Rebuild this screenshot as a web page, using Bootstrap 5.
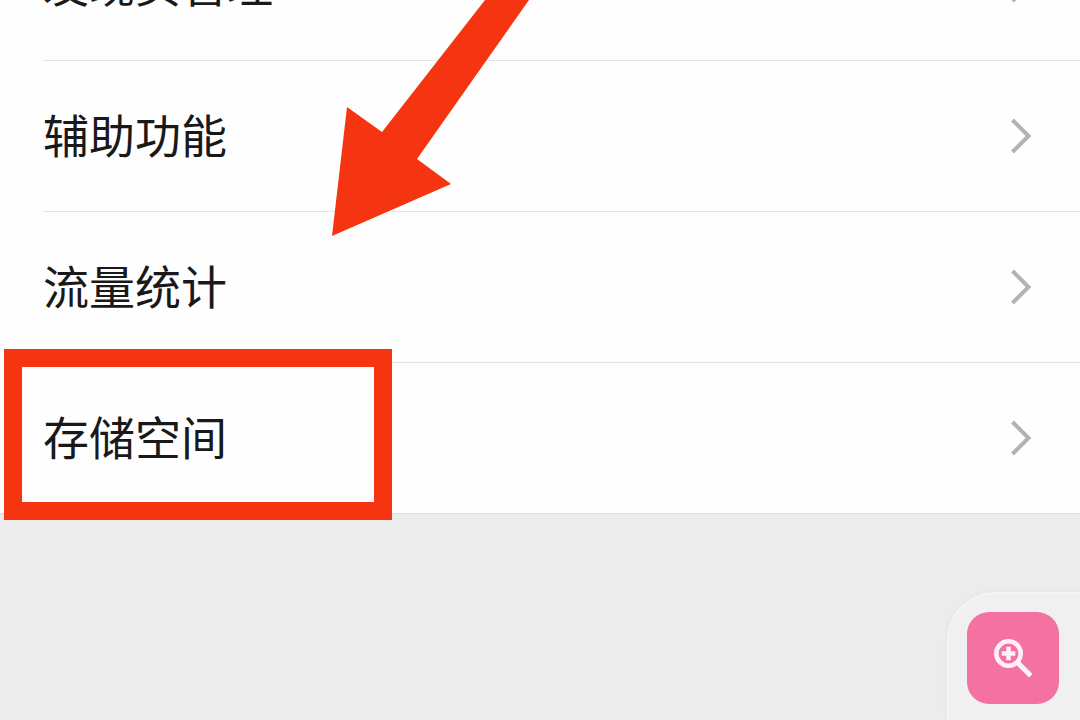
<!DOCTYPE html>
<html lang="zh-CN">
<head>
<meta charset="utf-8">
<meta name="viewport" content="width=device-width, initial-scale=1">
<title>设置</title>
<link href="https://cdn.jsdelivr.net/npm/bootstrap@5.3.0/dist/css/bootstrap.min.css" rel="stylesheet">
<style>
  body { background: #ececec; font-family: "Noto Sans CJK SC", sans-serif; }
  /* the list is scrolled so that its first row is partly out of view */
  .settings-view { height: 100vh; }
  .settings-list { margin-top: -90px; background: #fefefe; border-bottom: 1px solid #e0e0e0; }
  .settings-row { height: 151px; padding-left: 43px; color: #191919; font-size: 46px; line-height: 60px; }
  .settings-row:last-child { height: 150px; }
  .row-body { padding-right: 48px; border-bottom: 1px solid #e4e4e4; }
  .row-label { padding-bottom: 6px; }
  .settings-row:last-child .row-body { border-bottom: 0; }
  .highlight-box { left: 4px; top: -14px; width: 388px; height: 171px; border: 18px solid #f53511; pointer-events: none; z-index: 2; }
  .pointer-arrow { left: 332px; top: 0; pointer-events: none; z-index: 3; }
  .search-dock { padding: 18px 21px 16px 18px; background: #f0f0f0; border: 2px solid #f4f4f4; border-width: 2px 0 0 2px; border-top-left-radius: 48px; box-shadow: 0 0 5px #e2e2e2; }
  .search-btn { width: 92px; height: 92px; border-radius: 22px; background: #f472a2; }
</style>
</head>
<body>
<main class="settings-view position-relative overflow-hidden">
  <nav class="settings-list d-flex flex-column" aria-label="设置">
    <a href="#discover" class="settings-row d-flex text-decoration-none">
      <span class="row-body d-flex flex-grow-1 align-items-center justify-content-between">
        <span class="row-label">发现页管理</span>
        <svg width="22" height="36" viewBox="0 0 22 36" fill="none" stroke="#b2b2b2" stroke-width="4" aria-hidden="true"><path d="M2.500 2 18.500 18 2.500 34"/></svg>
      </span>
    </a>
    <a href="#accessibility" class="settings-row d-flex text-decoration-none">
      <span class="row-body d-flex flex-grow-1 align-items-center justify-content-between">
        <span class="row-label">辅助功能</span>
        <svg width="22" height="36" viewBox="0 0 22 36" fill="none" stroke="#b2b2b2" stroke-width="4" aria-hidden="true"><path d="M2.500 2 18.500 18 2.500 34"/></svg>
      </span>
    </a>
    <a href="#traffic" class="settings-row d-flex text-decoration-none">
      <span class="row-body d-flex flex-grow-1 align-items-center justify-content-between">
        <span class="row-label">流量统计</span>
        <svg width="22" height="36" viewBox="0 0 22 36" fill="none" stroke="#b2b2b2" stroke-width="4" aria-hidden="true"><path d="M2.500 2 18.500 18 2.500 34"/></svg>
      </span>
    </a>
    <a href="#storage" class="settings-row d-flex text-decoration-none position-relative">
      <span class="row-body d-flex flex-grow-1 align-items-center justify-content-between">
        <span class="row-label">存储空间</span>
        <svg width="22" height="36" viewBox="0 0 22 36" fill="none" stroke="#b2b2b2" stroke-width="4" aria-hidden="true"><path d="M2.500 2 18.500 18 2.500 34"/></svg>
      </span>
      <span class="highlight-box position-absolute"></span>
    </a>
  </nav>

  <svg class="pointer-arrow position-absolute" width="198" height="237" viewBox="0 0 198 237" aria-hidden="true">
    <path fill="#f53511" d="M153 0H197L85 159 119 184 0 236 15 107 50 132Z"/>
  </svg>

  <div class="search-dock position-absolute end-0 bottom-0">
    <button type="button" class="search-btn btn border-0 p-0 d-flex align-items-center justify-content-center" aria-label="放大">
      <svg width="40" height="40" viewBox="0 0 40 40" fill="none" stroke="#fff0f7" aria-hidden="true">
        <circle cx="15.500" cy="15.500" r="12.200" stroke-width="4.600"/>
        <path stroke-width="4.600" d="M15.500 8.700v13.600M8.700 15.500h13.600"/>
        <path stroke-width="5" d="M23.500 23.500 37.800 37.800"/>
      </svg>
    </button>
  </div>
</main>
<script src="https://cdn.jsdelivr.net/npm/bootstrap@5.3.0/dist/js/bootstrap.bundle.min.js"></script>
</body>
</html>
